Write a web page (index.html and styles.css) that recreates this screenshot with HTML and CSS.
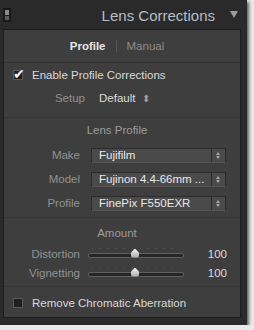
FILE: index.html
```html
<!DOCTYPE html>
<html lang="en">
<head>
    <meta charset="UTF-8">
    <title>Lens Corrections</title>
    <link rel="stylesheet" href="styles.css">
</head>
<body>
    <div class="frame">
        <div class="header">
            <div class="switch"><span></span><span></span></div>
            <div class="title">Lens Corrections</div>
            <div class="collapse"></div>
        </div>

        <div class="panel">
            <div class="tabs">
                <span class="tab active">Profile</span>
                <span class="tab-sep"></span>
                <span class="tab">Manual</span>
            </div>

            <div class="section section-enable">
                <label class="check-row">
                    <span class="checkbox checked">&#10004;</span>
                    Enable Profile Corrections
                </label>
                <div class="setup-row">
                    <span class="label">Setup</span>
                    <span class="value">Default</span>
                    <span class="updown">&#11021;</span>
                </div>
            </div>

            <div class="section section-profile">
                <div class="section-title">Lens Profile</div>
                <div class="field">
                    <span class="label">Make</span>
                    <div class="select"><span>Fujifilm</span><i></i></div>
                </div>
                <div class="field">
                    <span class="label">Model</span>
                    <div class="select"><span>Fujinon 4.4-66mm ...</span><i></i></div>
                </div>
                <div class="field">
                    <span class="label">Profile</span>
                    <div class="select"><span>FinePix F550EXR</span><i></i></div>
                </div>
            </div>

            <div class="section section-amount">
                <div class="section-title">Amount</div>
                <div class="slider-row">
                    <span class="label">Distortion</span>
                    <div class="slider"><div class="track"></div><div class="thumb" style="left: 43px"></div></div>
                    <span class="amount">100</span>
                </div>
                <div class="slider-row">
                    <span class="label">Vignetting</span>
                    <div class="slider"><div class="track"></div><div class="thumb" style="left: 43px"></div></div>
                    <span class="amount">100</span>
                </div>
            </div>

            <div class="section section-ca">
                <label class="check-row">
                    <span class="checkbox"></span>
                    Remove Chromatic Aberration
                </label>
            </div>
        </div>
    </div>
</body>
</html>
```

FILE: styles.css
```css
body {
    margin: 0;
    background-color: #e9e9e9;
    font-family: "Liberation Sans", Arial, sans-serif;
    font-size: 11.5px;
    color: #d6d6d6;
}

.frame {
    width: 247px;
    height: 325px;
    background-color: #2a2a2a;
    box-shadow: 2px 2px 3px rgba(0, 0, 0, 0.6);
    box-sizing: border-box;
    padding: 0 6px 7px 3px;
    display: flex;
    flex-direction: column;
}

/* header */
.header {
    height: 29px;
    display: flex;
    align-items: center;
}

.switch {
    width: 8px;
    height: 14px;
    margin-top: 1px;
    border: 1px solid #151515;
    background-color: #1c1c1c;
    display: flex;
    flex-direction: column;
    gap: 1px;
    padding: 1px;
    box-sizing: border-box;
}

.switch span {
    flex: 1;
    background-color: #8a8a8a;
}

.switch span + span {
    background-color: #5c5c5c;
}

.title {
    flex: 1;
    text-align: right;
    font-size: 15px;
    color: #b4bcc8;
    margin-right: 15px;
    margin-top: 1px;
}

.collapse {
    width: 0;
    height: 0;
    border-left: 4px solid transparent;
    border-right: 4px solid transparent;
    border-top: 7px solid #9a9ea4;
    margin-right: 3px;
}

/* panel */
.panel {
    flex: 1;
    background-color: #3e3e3e;
    border: 1px solid #1d1d1d;
    display: flex;
    flex-direction: column;
}

.tabs {
    height: 32px;
    display: flex;
    align-items: center;
    justify-content: center;
    gap: 10px;
    padding-right: 10px;
    border-bottom: 1px solid #333;
}

.tab {
    color: #8c8c8c;
}

.tab.active {
    color: #e6e6e6;
    font-weight: bold;
}

.tab-sep {
    width: 1px;
    height: 12px;
    background-color: #555;
}

.section {
    border-bottom: 1px solid #363636;
}

.section-enable {
    height: 54px;
}

.check-row {
    display: flex;
    align-items: center;
    gap: 9px;
    padding-left: 9px;
    height: 22px;
    margin-top: 1px;
    color: #d9d9d9;
}

.checkbox {
    width: 10px;
    height: 10px;
    border: 1px solid #5a5a5a;
    background-color: #1f1f1f;
    box-sizing: border-box;
    font-size: 14px;
    line-height: 6px;
    color: #f4f4f4;
    text-indent: -1px;
}

.setup-row {
    display: flex;
    align-items: center;
    height: 24px;
}

.setup-row .label {
    width: 81px;
}

.setup-row .value {
    margin-left: 14px;
    color: #dcdcdc;
}

.updown {
    margin-left: 7px;
    font-size: 10px;
    color: #a0a0a0;
}

.section-title {
    text-align: center;
    color: #9c9c9c;
    padding-right: 10px;
}

.section-profile {
    height: 99px;
}

.section-profile .section-title {
    height: 25px;
    line-height: 25px;
}

.field {
    display: flex;
    align-items: center;
    height: 24px;
}

.label {
    width: 76px;
    text-align: right;
    color: #929292;
}

.select {
    margin-left: 11px;
    width: 135px;
    height: 15px;
    box-sizing: border-box;
    border: 1px solid #2c2c2c;
    border-bottom-color: #555;
    background-color: #4a4a4a;
    display: flex;
    align-items: center;
    color: #e8e8e8;
}

.select span {
    flex: 1;
    padding-left: 7px;
    white-space: nowrap;
    overflow: hidden;
}

.select i {
    width: 13px;
    height: 13px;
    border-left: 1px solid #2c2c2c;
    position: relative;
}

.select i::before,
.select i::after {
    content: "";
    position: absolute;
    left: 4px;
    border-left: 2px solid transparent;
    border-right: 2px solid transparent;
}

.select i::before {
    top: 3px;
    border-bottom: 3px solid #a8a8a8;
}

.select i::after {
    top: 7px;
    border-top: 3px solid #a8a8a8;
}

.section-amount {
    height: 68px;
}

.section-amount .section-title {
    height: 26px;
    line-height: 30px;
}

.slider-row {
    display: flex;
    align-items: center;
    height: 19px;
}

.slider {
    position: relative;
    margin-left: 8px;
    width: 96px;
    height: 12px;
}

.slider::before {
    content: "";
    position: absolute;
    left: 4px;
    right: 4px;
    top: 0;
    height: 1px;
    background: repeating-linear-gradient(90deg, #5a5a5a 0 1px, transparent 1px 8px);
}

.track {
    position: absolute;
    left: 0;
    right: 0;
    top: 5px;
    height: 3px;
    border-radius: 2px;
    background-color: #262626;
    border: 1px solid #606060;
}

.thumb {
    position: absolute;
    top: 1px;
    width: 8px;
    height: 9px;
    background: linear-gradient(#f4f4f4, #a8a8a8);
    clip-path: polygon(50% 0, 100% 45%, 100% 100%, 0 100%, 0 45%);
    border-radius: 0 0 3px 3px;
}

.amount {
    flex: 1;
    text-align: right;
    padding-right: 13px;
    color: #dcdcdc;
}

.section-ca {
    border-bottom: none;
    padding-top: 4px;
}
```
